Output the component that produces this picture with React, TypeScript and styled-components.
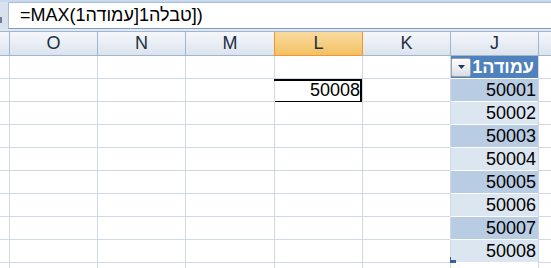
import React from 'react';
import styled, { createGlobalStyle } from 'styled-components';

const GlobalStyle = createGlobalStyle`
  html, body { margin: 0; padding: 0; background: #ffffff; }
  body { font-family: "Liberation Sans", Arial, sans-serif; overflow: hidden; }
`;

type Col = { id: string; w: number };
const COLS: Col[] = [
  { id: 'I', w: 13 },
  { id: 'J', w: 88 },
  { id: 'K', w: 88 },
  { id: 'L', w: 88 },
  { id: 'M', w: 89 },
  { id: 'N', w: 88 },
  { id: 'O', w: 88 },
  { id: 'P', w: 9 },
];
const TEMPLATE = COLS.map((c) => `${c.w}px`).join(' ');

const Page = styled.div`
  width: 551px;
  height: 268px;
  overflow: hidden;
  display: flex;
  flex-direction: column;
  background: #ffffff;
`;

const FormulaBar = styled.div`
  display: flex;
  height: 29px;
  box-sizing: border-box;
  padding-top: 2px;
  background: #c8d9ed;
`;

const FxStub = styled.div`
  width: 8px;
  background: #d8e1ed;
  position: relative;
`;

const StubMark = styled.span`
  position: absolute;
  left: 0;
  top: 15px;
  width: 2px;
  height: 6px;
  background: #6d7f95;
`;

const FormulaInput = styled.div`
  flex: 1;
  box-sizing: border-box;
  background: #ffffff;
  border-top: 1px solid #a7bdd6;
  border-left: 1px solid #a7bdd6;
  border-bottom: 1px solid #7f9dc0;
  padding-left: 11px;
  font-size: 18px;
  line-height: 25px;
  color: #000000;
  white-space: nowrap;
  direction: ltr;
`;

/* Excel 2007 laid out the Hebrew run without bracket pairing */
const FormulaRtlRun = styled.span`
  direction: rtl;
  unicode-bidi: isolate;
`;

const BarGap = styled.div`
  height: 2px;
  background: #e1e8f2;
`;

const Sheet = styled.div`
  direction: rtl;
  flex: 1;
  overflow: hidden;
`;

const HeaderRow = styled.div`
  display: grid;
  grid-template-columns: ${TEMPLATE};
  border-top: 1px solid #9eb6ce;
`;

const HeaderCell = styled.div<{ $selected?: boolean; $accentEdge?: boolean; $first?: boolean }>`
  height: 24px;
  box-sizing: border-box;
  border-left: ${(p) => (p.$first ? 'none' : `1px solid ${p.$selected || p.$accentEdge ? '#f29536' : '#9eb6ce'}`)};
  border-bottom: 1px solid ${(p) => (p.$selected ? '#f29536' : '#9eb6ce')};
  background: ${(p) =>
    p.$selected
      ? 'linear-gradient(to bottom, #f9d99c 0%, #f6cf83 50%, #f1c15f 100%)'
      : 'linear-gradient(to bottom, #f4f6fa 0%, #e9eef5 50%, #dce3ec 100%)'};
  color: #1d2f42;
  font-size: 18px;
  line-height: 23px;
  text-align: center;
  overflow: hidden;
`;

const Row = styled.div<{ $h: number }>`
  display: grid;
  grid-template-columns: ${TEMPLATE};
  height: ${(p) => p.$h}px;
`;

type Tone = 'plain' | 'band1' | 'band2' | 'head';

const toneBg: Record<Tone, string> = {
  plain: '#ffffff',
  band1: '#b8cce4',
  band2: '#dce6f1',
  head: '#4f81bd',
};

const Cell = styled.div<{ $tone: Tone; $first?: boolean }>`
  position: relative;
  box-sizing: border-box;
  border-left: ${(p) => (p.$first ? 'none' : '1px solid #d0d7e5')};
  border-bottom: 1px solid ${(p) => (p.$tone === 'plain' ? '#d0d7e5' : '#ffffff')};
  background: ${(p) => toneBg[p.$tone]};
  font-size: 18px;
  line-height: 22px;
  color: #000000;
  padding-right: 2px;
  text-align: right;
  white-space: nowrap;
`;

const TableHeadCell = styled(Cell)`
  display: flex;
  align-items: center;
  justify-content: space-between;
  padding-right: 4px;
  color: #ffffff;
  font-weight: bold;
`;

const HeadLabel = styled.span`
  line-height: 22px;
`;

const FilterButton = styled.span`
  width: 20px;
  height: 19px;
  box-sizing: border-box;
  border: 1px solid #9aa3ad;
  border-radius: 2px;
  background: linear-gradient(to bottom, #fbfbfb 0%, #eceef0 55%, #d9dce0 100%);
  display: flex;
  align-items: center;
  justify-content: center;
`;

const Selection = styled.div`
  position: absolute;
  left: -3px;
  right: 0;
  top: 0;
  bottom: -2px;
  border: 2px solid #000000;
  box-sizing: border-box;
  pointer-events: none;
`;

const FillHandle = styled.span`
  position: absolute;
  left: -5px;
  bottom: -5px;
  width: 6px;
  height: 6px;
  box-sizing: border-box;
  background: #000000;
  border: 1px solid #ffffff;
`;

const ResizeGrip = styled.svg`
  position: absolute;
  left: -2px;
  bottom: -1px;
  width: 7px;
  height: 6px;
`;

const ROW_COUNT = 9;

function cellFor(col: Col, r: number) {
  const first = col.id === 'P';
  if (col.id === 'J') {
    if (r === 1) {
      return (
        <TableHeadCell key={col.id} $tone="head">
          <HeadLabel>עמודה1</HeadLabel>
          <FilterButton>
            <svg width="7" height="4" viewBox="0 0 7 4">
              <path d="M0 0 H7 L3.5 4 Z" fill="#1f3864" />
            </svg>
          </FilterButton>
        </TableHeadCell>
      );
    }
    if (r <= ROW_COUNT) {
      return (
        <Cell key={col.id} $tone={r % 2 === 0 ? 'band1' : 'band2'}>
          {50000 + (r - 1)}
          {r === ROW_COUNT && (
            <ResizeGrip viewBox="0 0 7 6">
              <path d="M0 0 H2 V3 H7 V6 H0 Z" fill="#3c5ba8" />
            </ResizeGrip>
          )}
        </Cell>
      );
    }
  }
  if (col.id === 'L' && r === 2) {
    return (
      <Cell key={col.id} $tone="plain">
        50008
        <Selection>
          <FillHandle />
        </Selection>
      </Cell>
    );
  }
  return <Cell key={col.id} $tone="plain" $first={first} />;
}

export default function App() {
  const rows = Array.from({ length: ROW_COUNT + 1 }, (_, i) => i + 1);
  return (
    <>
      <GlobalStyle />
      <Page>
        <FormulaBar>
          <FxStub>
            <StubMark />
          </FxStub>
          <FormulaInput dir="ltr">
            =MAX(<FormulaRtlRun>טבלה1[עמודה1</FormulaRtlRun>])
          </FormulaInput>
        </FormulaBar>
        <BarGap />
        <Sheet dir="rtl">
          <HeaderRow>
            {COLS.map((c) => (
              <HeaderCell
                key={c.id}
                $selected={c.id === 'L'}
                $accentEdge={c.id === 'K'}
                $first={c.id === 'P'}
              >
                {c.id === 'I' || c.id === 'P' ? '' : c.id}
              </HeaderCell>
            ))}
          </HeaderRow>
          {rows.map((r) => (
            <Row key={r} $h={23}>
              {COLS.map((c) => cellFor(c, r))}
            </Row>
          ))}
        </Sheet>
      </Page>
    </>
  );
}
